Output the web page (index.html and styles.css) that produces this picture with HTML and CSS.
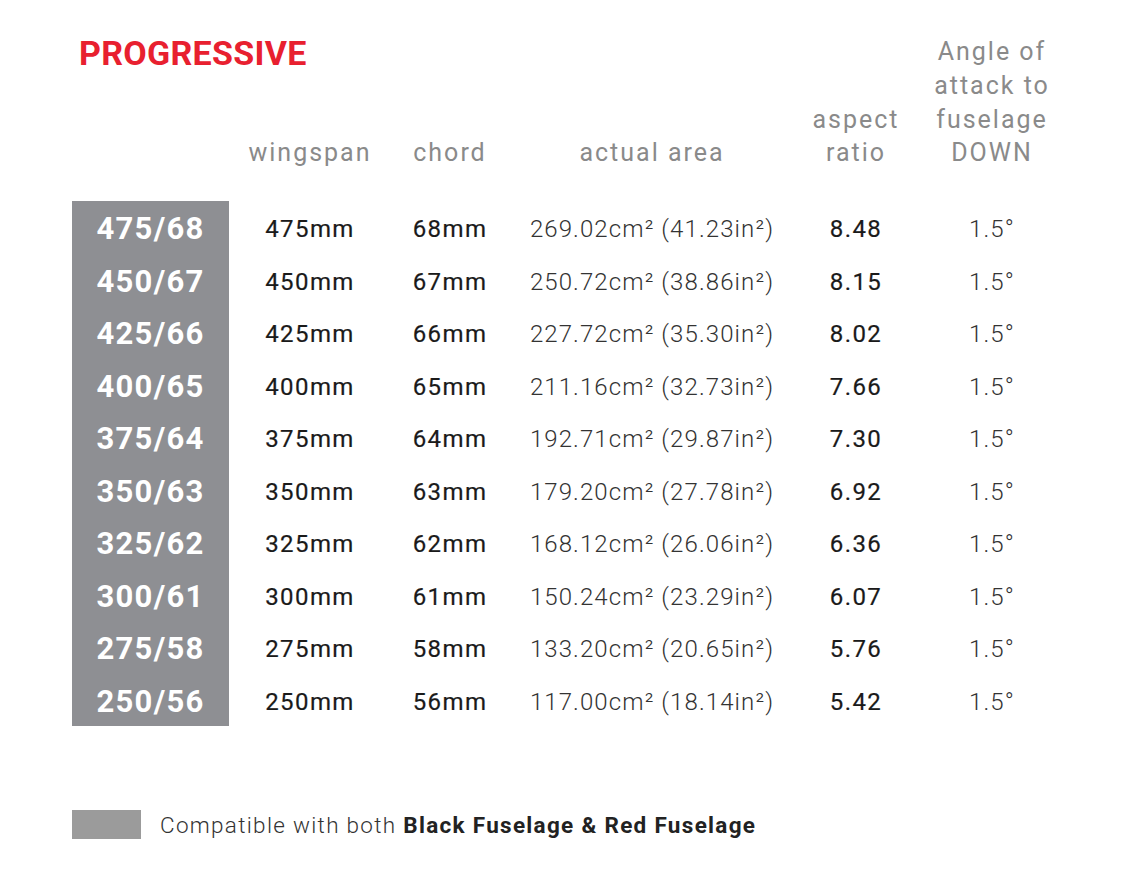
FILE: index.html
```html
<!DOCTYPE html>
<html lang="en">
<head>
    <meta charset="UTF-8">
    <meta name="viewport" content="width=device-width, initial-scale=1.0">
    <title>Progressive</title>
    <link rel="stylesheet" href="styles.css">
</head>
<body>
    <div class="sheet">
        <section class="spec-head cols">
            <h1 class="title">PROGRESSIVE</h1>
            <div class="th">wingspan</div>
            <div class="th">chord</div>
            <div class="th">actual area</div>
            <div class="th">aspect<br>ratio</div>
            <div class="th">Angle of<br>attack to<br>fuselage<br>DOWN</div>
        </section>
        <section class="spec-body" id="rows"></section>
        <div class="legend">
            <span class="swatch"></span>
            <p>Compatible with both <b>Black Fuselage &amp; Red Fuselage</b></p>
        </div>
    </div>
 <script>
    const wings = [
        ['475/68','475mm','68mm','269.02','41.23','8.48'],
        ['450/67','450mm','67mm','250.72','38.86','8.15'],
        ['425/66','425mm','66mm','227.72','35.30','8.02'],
        ['400/65','400mm','65mm','211.16','32.73','7.66'],
        ['375/64','375mm','64mm','192.71','29.87','7.30'],
        ['350/63','350mm','63mm','179.20','27.78','6.92'],
        ['325/62','325mm','62mm','168.12','26.06','6.36'],
        ['300/61','300mm','61mm','150.24','23.29','6.07'],
        ['275/58','275mm','58mm','133.20','20.65','5.76'],
        ['250/56','250mm','56mm','117.00','18.14','5.42']
    ];
    const rowBox = document.querySelector('#rows');
    rowBox.innerHTML = wings.map(w => {
        return `<div class="row cols">
            <div class="name">${w[0]}</div>
            <div class="td mid">${w[1]}</div>
            <div class="td mid">${w[2]}</div>
            <div class="td light">${w[3]}cm² (${w[4]}in²)</div>
            <div class="td mid">${w[5]}</div>
            <div class="td light">1.5°</div>
        </div>`
    }).join('');
 </script>
</body>
</html>
```

FILE: styles.css
```css
*{margin: 0;padding: 0;box-sizing: border-box}
body{background: #fff;font-family: Roboto, "Liberation Sans", sans-serif;color: #222;}
.sheet{width: 1130px;height: 875px;padding: 34px 0 0 72px;}
.cols{display: grid;grid-template-columns: 157px 162px 118px 286px 122px 150px;text-align: center;}
.spec-head{align-items: end;height: 136px;}
.title{align-self: start;text-align: left;padding-left: 7px;font-size: 34px;font-weight: 700;color: #e8202f;letter-spacing: 0.3px;line-height: 38px;white-space: nowrap;width: 157px;}
.th{font-size: 25px;line-height: 33.7px;color: #8a8a8a;letter-spacing: 2px;}
.spec-body{margin-top: 31px;}
.row{height: 52.5px;align-items: center;}
.row .td{padding-top: 4px;}
.name{height: 100%;background: #8e8f93;color: #fff;font-size: 31px;font-weight: 700;display: flex;align-items: center;justify-content: center;letter-spacing: 1.3px;padding-top: 3px;}
.td{font-size: 24px;letter-spacing: 1.1px;}
.mid{font-weight: 400;color: #1a1a1a;-webkit-text-stroke: 0.2px #1a1a1a;letter-spacing: 1.4px;}
.light{font-weight: 300;color: #333;}
.legend{display: flex;align-items: center;gap: 19px;margin-top: 84px;}
.swatch{width: 69px;height: 29px;background: #9b9b9b;}
.legend p{font-size: 22.5px;font-weight: 300;letter-spacing: 1.3px;color: #333;}
.legend b{font-weight: 700;color: #222;}
```
